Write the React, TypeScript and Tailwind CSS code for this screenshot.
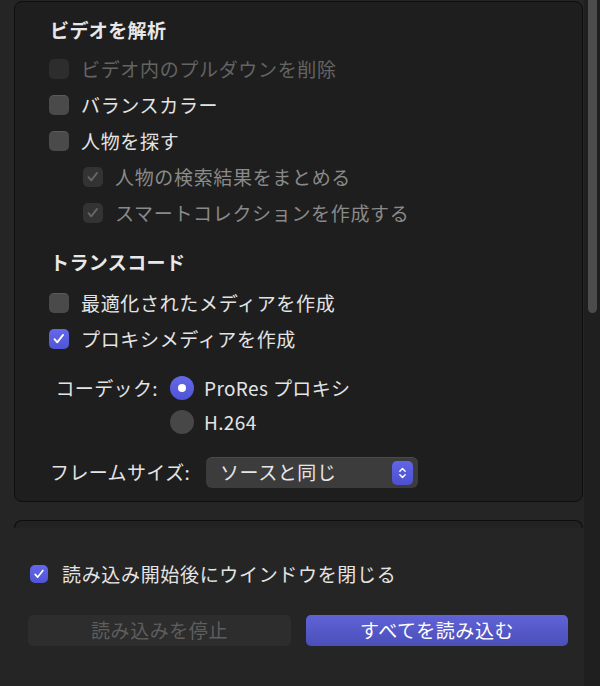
import type { ReactNode } from 'react';

type BoxState = 'off' | 'disabled' | 'dimChecked' | 'on';

const FONT = { fontFamily: '"Noto Sans CJK JP", "Noto Sans", sans-serif' };

function Check({ state, size = 20 }: { state: BoxState; size?: number }) {
  const base = 'flex items-center justify-center rounded-[5px] shrink-0';
  const tone = {
    off: 'bg-[#4a4a4a] border-t border-[#5a5a5a]',
    disabled: 'bg-[#2d2d2d]',
    dimChecked: 'bg-[#333333]',
    on: 'bg-gradient-to-b from-[#6468ea] to-[#4f53d4]',
  }[state];
  return (
    <span className={`${base} ${tone}`} style={{ width: size, height: size }}>
      {(state === 'on' || state === 'dimChecked') && (
        <svg viewBox="0 0 20 20" className="w-[78%] h-[78%]" fill="none">
          <path
            d="M4.5 10.5l3.5 4 7.5-9.5"
            stroke={state === 'on' ? '#ffffff' : '#666666'}
            strokeWidth={2.4}
            strokeLinecap="round"
            strokeLinejoin="round"
          />
        </svg>
      )}
    </span>
  );
}

function Row({ state, children, indent }: { state: BoxState; children: ReactNode; indent?: boolean }) {
  const text =
    state === 'disabled' ? 'text-[#646464]' : state === 'dimChecked' ? 'text-[#8a8a8a]' : 'text-[#e4e4e4]';
  return (
    <div className={`h-[36px] flex items-center gap-[12px] ${indent ? 'pl-[68px]' : 'pl-[34px]'}`}>
      <Check state={state} />
      <span className={`text-[19px] tracking-[0.035em] ${text}`}>{children}</span>
    </div>
  );
}

function Radio({ on, children }: { on?: boolean; children: ReactNode }) {
  return (
    <div className="h-[34px] flex items-center gap-[10px]">
      <span
        className={`w-[24px] h-[24px] rounded-full flex items-center justify-center ${
          on ? 'bg-gradient-to-b from-[#6468ea] to-[#4f53d4]' : 'bg-[#474747]'
        }`}
      >
        {on && <span className="w-[8px] h-[8px] rounded-full bg-white" />}
      </span>
      <span className="text-[19px] tracking-[0.02em] text-[#e4e4e4] whitespace-nowrap">{children}</span>
    </div>
  );
}

export default function App() {
  return (
    <div className="relative w-[600px] h-[686px] overflow-hidden bg-[#252525] pl-[14px]" style={FONT}>
      {/* settings box */}
      <div className="mt-px w-[569px] rounded-[8px] border border-[#0e0e0e] bg-[#1e1e1e] pt-[14px] pb-[13px]">
        <h2 className="h-[28px] pl-[35px] flex items-center text-[19px] tracking-[0.02em] font-bold text-[#e8e8e8]">
          ビデオを解析
        </h2>
        <div className="mt-[7px]">
          <Row state="disabled">ビデオ内のプルダウンを削除</Row>
          <Row state="off">バランスカラー</Row>
          <Row state="off">人物を探す</Row>
          <Row state="dimChecked" indent>人物の検索結果をまとめる</Row>
          <Row state="dimChecked" indent>スマートコレクションを作成する</Row>
        </div>

        <h2 className="mt-[17px] h-[28px] pl-[35px] flex items-center text-[19px] tracking-[0.02em] font-bold text-[#e8e8e8]">
          トランスコード
        </h2>
        <div className="mt-[9px]">
          <Row state="off">最適化されたメディアを作成</Row>
          <Row state="on">プロキシメディアを作成</Row>
        </div>

        <div className="mt-[14px] flex">
          <span className="w-[143px] h-[34px] flex items-center justify-end whitespace-nowrap text-[19px] tracking-[0.02em] text-[#e4e4e4]">
            コーデック:
          </span>
          <div className="ml-[12px]">
            <Radio on>ProRes プロキシ</Radio>
            <Radio>H.264</Radio>
          </div>
        </div>

        <div className="mt-[17px] h-[32px] flex items-center pl-[35px]">
          <span className="w-[156px] whitespace-nowrap text-[19px] tracking-[0.02em] text-[#e4e4e4]">フレームサイズ:</span>
          <div className="w-[212px] h-[31px] rounded-[6px] bg-[#3c3c3c] border-t border-[#4a4a4a] flex items-center justify-between pl-[14px] pr-[5px]">
            <span className="text-[19px] tracking-[0.03em] text-[#e6e6e6]">ソースと同じ</span>
            <span className="w-[21px] h-[24px] rounded-[5px] bg-gradient-to-b from-[#6266e6] to-[#4c50d0] flex items-center justify-center">
              <svg viewBox="0 0 12 18" className="w-[11px] h-[16px]" fill="none">
                <path d="M3 7l3-3 3 3M3 11l3 3 3-3" stroke="#ffffff" strokeWidth={1.6} strokeLinecap="round" strokeLinejoin="round" />
              </svg>
            </span>
          </div>
        </div>
      </div>

      {/* next collapsed box */}
      <div className="mt-[18px] w-[569px] h-[8px] rounded-t-[8px] border-t border-x border-[#0e0e0e] bg-[#222222]" />

      {/* footer */}
      <div className="mt-[35px] pl-[16px] flex items-center gap-[14px] h-[22px]">
        <Check state="on" size={18} />
        <span className="text-[19px] tracking-[0.035em] text-[#e4e4e4]">読み込み開始後にウインドウを閉じる</span>
      </div>

      <div className="mt-[30px] pl-[14px] flex gap-[15px]">
        <button className="w-[263px] h-[31px] rounded-[5px] bg-[#2d2d2d] text-[19px] tracking-[0.03em] text-[#5e5e5e]">
          読み込みを停止
        </button>
        <button className="w-[262px] h-[31px] rounded-[5px] bg-gradient-to-b from-[#5f63d6] to-[#4b4fba] text-[19px] tracking-[0.03em] text-white">
          すべてを読み込む
        </button>
      </div>

      {/* scrollbar */}
      <div className="absolute top-0 right-0 w-[16px] h-full bg-[#1f1f1f]">
        <div className="absolute left-[4px] top-0 w-[9px] h-[313px] rounded-b-[5px] bg-[#4c4c4c]" />
      </div>
    </div>
  );
}
